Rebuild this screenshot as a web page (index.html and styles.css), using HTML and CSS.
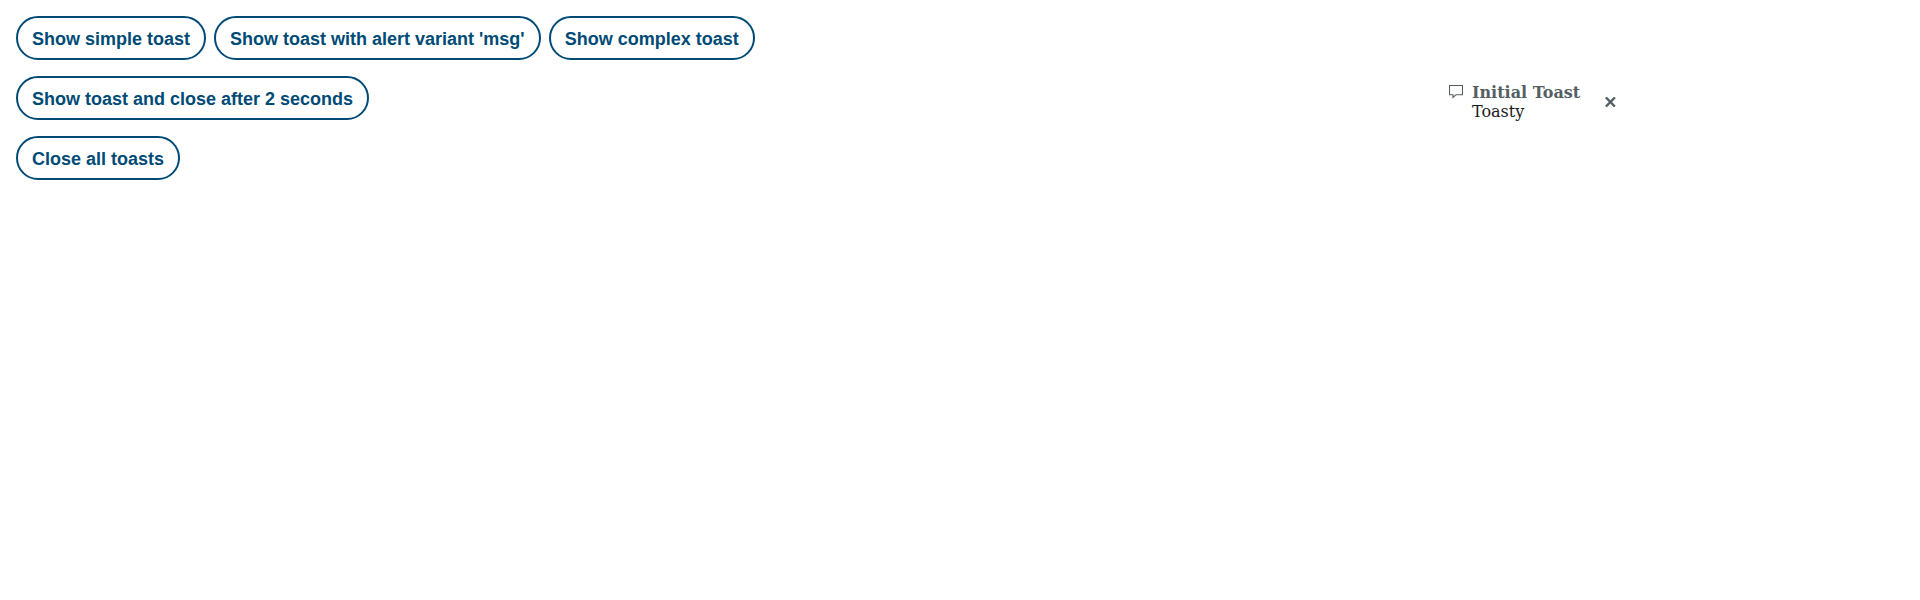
FILE: index.html
```html
<!DOCTYPE html>
<html lang="en">
<head>
<meta charset="utf-8">
<title>Toasts</title>
<link rel="stylesheet" href="styles.css">
</head>
<body>
<main class="actions">
  <div class="row">
    <button class="button">Show simple toast</button>
    <button class="button">Show toast with alert variant 'msg'</button>
    <button class="button">Show complex toast</button>
  </div>
  <div class="row"><button class="button">Show toast and close after 2 seconds</button></div>
  <div class="row"><button class="button">Close all toasts</button></div>
</main>
<aside class="toast" role="status">
  <svg class="toast-icon" width="14" height="14" viewBox="0 0 14 14" aria-hidden="true"><path d="M.5.5h13v9.2H7L4 12.5V9.7H.5z"/></svg>
  <div class="toast-content">
    <strong class="toast-title">Initial Toast</strong>
    <span>Toasty</span>
  </div>
  <button class="toast-close" aria-label="Close"><svg width="11" height="10" viewBox="0 0 11 10"><path d="M.9.4l9 9.2M9.9.4L.9 9.6"/></svg></button>
</aside>
</body>
</html>
```
FILE: styles.css
```css
body {
  margin: 0;
  background: #fff;
}
.actions {
  display: flex;
  flex-direction: column;
  gap: 16px;
  padding: 16px;
}
.row {
  display: flex;
  gap: 8px;
}
.button {
  box-sizing: border-box;
  height: 44px;
  padding: 2px 14px 0;
  border: 2px solid #004b76;
  border-radius: 22px;
  background: transparent;
  color: #004b76;
  font: 700 18px/24px "Liberation Sans", Arial, sans-serif;
  white-space: nowrap;
}
.toast {
  position: absolute;
  top: 83px;
  left: 1449px;
  display: flex;
  width: 167px;
  color: #1a1a1a;
  font: 16px/19px "DejaVu Serif", serif;
}
.toast-icon {
  flex: none;
  margin: 2px 9px 0 0;
  fill: none;
  stroke: #535f62;
  stroke-width: 1.1;
}
.toast-content {
  display: flex;
  flex: 1;
  flex-direction: column;
  white-space: nowrap;
}
.toast-title {
  color: #535f62;
}
.toast-close {
  align-self: center;
  display: flex;
  padding: 0;
  border: 0;
  background: none;
}
.toast-close svg {
  fill: none;
  stroke: #535f62;
  stroke-width: 2.3;
}
```
